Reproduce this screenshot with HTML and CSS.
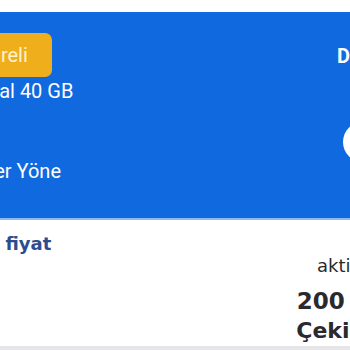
FILE: index.html
```html
<!DOCTYPE html>
<html lang="tr">
<head>
<meta charset="utf-8">
<link rel="stylesheet" href="styles.css">
</head>
<body>
<div class="page">
  <div class="topgap"></div>
  <section class="hero">
    <div class="hero-left">
      <div class="badge">Süreli</div>
      <div class="line line-data">Dijital 40 GB</div>
      <div class="line line-voice">Diğer Yöne</div>
    </div>
    <div class="hero-right">
      <div class="hero-title">Detay</div>
      <div class="circle"></div>
    </div>
  </section>
  <section class="info">
    <div class="info-left">
      <div class="label">Özel fiyat</div>
    </div>
    <div class="info-right">
      <div class="status">aktif</div>
      <div class="price">200 TL</div>
      <div class="promo">Çekiliş</div>
    </div>
  </section>
  <div class="footer-band"></div>
</div>
</body>
</html>
```

FILE: styles.css
```css
* { box-sizing: border-box; }
html, body { margin: 0; padding: 0; background: #fff; }
.page {
  width: 350px;
  height: 350px;
  overflow: hidden;
  display: flex;
  flex-direction: column;
}
.topgap { height: 12px; flex: none; background: #fff; }
.hero {
  flex: none;
  height: 208px;
  background: #1169df;
  border-bottom: 2px solid #8dbbf0;
  display: flex;
  justify-content: space-between;
  font-family: Roboto, "Noto Sans", sans-serif;
  color: #fff;
  overflow: hidden;
}
.hero-left {
  margin-left: -35px;
  padding-top: 21px;
  display: flex;
  flex-direction: column;
  align-items: flex-start;
}
.badge {
  background: #efae1c;
  color: #fff2cf;
  font-size: 20px;
  line-height: 44px;
  height: 44px;
  padding: 0 24px 0 13px;
  border-radius: 7px;
}
.line { font-size: 20px; line-height: 24px; white-space: nowrap; }
.line-data { margin-top: 2px; }
.line-voice { margin-top: 56px; }
.hero-right {
  width: 13px;
  flex: none;
  padding-top: 32px;
  display: flex;
  flex-direction: column;
  align-items: flex-start;
  white-space: nowrap;
}
.hero-title { font-size: 20px; font-weight: 700; line-height: 24px; }
.circle {
  margin-top: 54px;
  margin-left: 6px;
  width: 40px;
  height: 40px;
  border-radius: 50%;
  background: #fff;
  flex: none;
}
.info {
  flex: 1;
  display: flex;
  justify-content: space-between;
  font-family: "DejaVu Sans", sans-serif;
  background: #fff;
  overflow: hidden;
}
.info-left { margin-left: -45px; padding-top: 12px; }
.label { font-size: 18px; font-weight: 700; color: #2c4d8d; line-height: 24px; white-space: nowrap; }
.info-right {
  width: 100px;
  margin-right: -37px;
  flex: none;
  padding-top: 34px;
  display: flex;
  flex-direction: column;
  align-items: center;
  white-space: nowrap;
  color: #2a2a2e;
}
.status { font-size: 18px; line-height: 24px; }
.price { font-size: 23px; font-weight: 700; line-height: 28px; margin-top: 9px; padding-left: 6px; }
.promo { font-size: 22px; font-weight: 700; line-height: 28px; margin-top: 2px; }
.footer-band { flex: none; height: 4px; background: #e6e6e8; }
```
